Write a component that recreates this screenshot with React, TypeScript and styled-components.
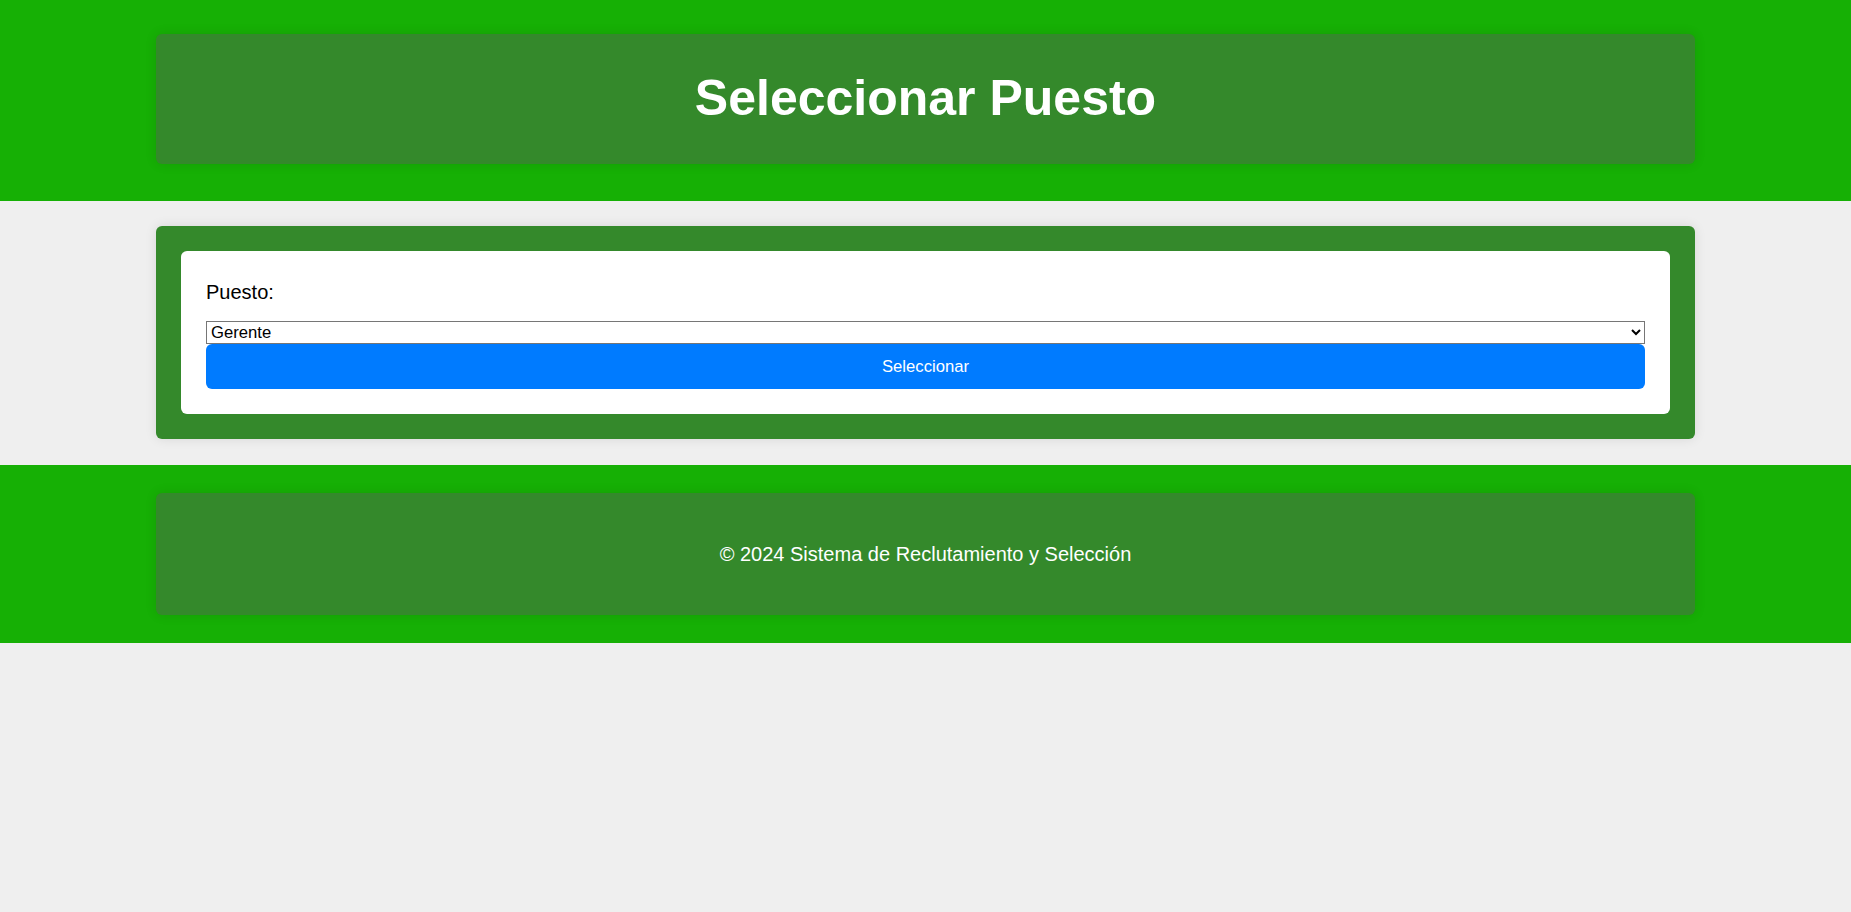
import styled, { createGlobalStyle } from "styled-components";

const GlobalStyle = createGlobalStyle`
  html, body {
    margin: 0;
    padding: 0;
    background: #efefef;
    font-family: "Liberation Sans", Arial, sans-serif;
  }
`;

export default function App() {
  return (
    <>
      <GlobalStyle />
      <Page>
        <Header>
          <HeaderBox>
            <Title>Seleccionar Puesto</Title>
          </HeaderBox>
        </Header>
        <Main>
          <MainBox>
            <Form onSubmit={(e) => e.preventDefault()}>
              <Label htmlFor="puesto">Puesto:</Label>
              <Select id="puesto" defaultValue="gerente">
                <option value="gerente">Gerente</option>
                <option value="analista">Analista</option>
                <option value="asistente">Asistente</option>
              </Select>
              <Button type="submit">Seleccionar</Button>
            </Form>
          </MainBox>
        </Main>
        <Footer>
          <FooterBox>
            <FooterText>© 2024 Sistema de Reclutamiento y Selección</FooterText>
          </FooterBox>
        </Footer>
      </Page>
    </>
  );
}

const Page = styled.div`
  min-height: 912px;
  display: flex;
  flex-direction: column;
`;

const Header = styled.header`
  background: #16b005;
  padding: 34px 0 37px;
`;

const Box = styled.div`
  width: 1539px;
  margin: 0 auto;
  box-sizing: border-box;
  background: #34892b;
  border-radius: 6px;
  box-shadow: 0 0 12px rgba(0, 0, 0, 0.1);
`;

const HeaderBox = styled(Box)`
  height: 130px;
  display: flex;
  align-items: center;
  justify-content: center;
`;

const Title = styled.h1`
  margin: 0 0 3px;
  color: #fff;
  font-size: 50px;
  font-weight: 700;
`;

const Main = styled.main`
  padding: 25px 0 26px;
`;

const MainBox = styled(Box)`
  padding: 25px;
`;

const Form = styled.form`
  background: #fff;
  border-radius: 6px;
  padding: 30px 25px 25px;
  display: flex;
  flex-direction: column;
`;

const Label = styled.label`
  font-size: 20px;
  line-height: 23px;
  color: #000;
  margin-bottom: 17px;
`;

const Select = styled.select`
  width: 100%;
  height: 23px;
  margin: 0;
  font-family: "Liberation Sans", Arial, sans-serif;
  font-size: 16.67px;
  border: 1px solid #767676;
  border-radius: 0;
  background: #fff;
  color: #000;
`;

const Button = styled.button`
  width: 100%;
  height: 45px;
  margin: 0;
  border: none;
  border-radius: 6px;
  background: #007bff;
  color: #fff;
  font-family: "Liberation Sans", Arial, sans-serif;
  font-size: 16.67px;
  cursor: pointer;
`;

const Footer = styled.footer`
  background: #16b005;
  padding: 28px 0;
`;

const FooterBox = styled(Box)`
  height: 122px;
  display: flex;
  align-items: center;
  justify-content: center;
`;

const FooterText = styled.p`
  margin: 0;
  color: #fff;
  font-size: 20px;
`;
